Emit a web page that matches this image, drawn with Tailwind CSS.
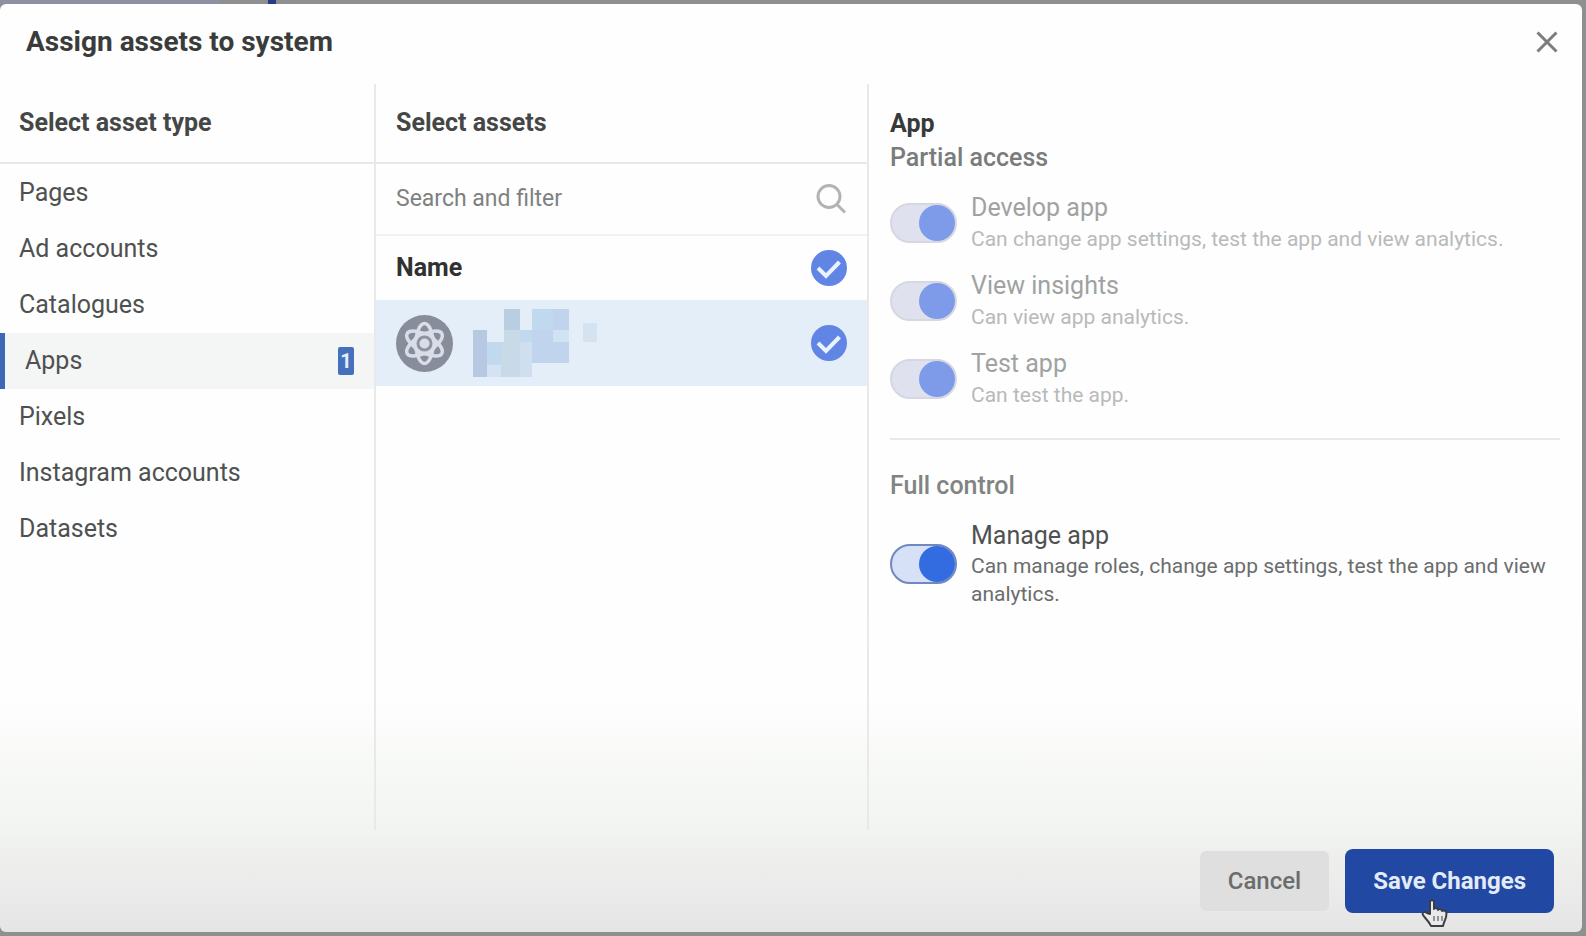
<!DOCTYPE html>
<html lang="en">

<head>
    <meta charset="utf-8">
    <title>Assign assets to system</title>
    <meta name="viewport" content="width=device-width, initial-scale=1.0">
    <script src="https://cdn.jsdelivr.net/npm/@tailwindcss/browser@4"></script>
</head>

<body class="h-screen overflow-hidden bg-[#8e908f] font-['Roboto',sans-serif] text-[#4f5151]">
    <!-- Page behind the dialog -->
    <div class="absolute inset-x-0 top-0 h-1 flex">
        <div class="w-[220px] bg-[#8d90a0]"></div>
        <div class="ml-12 w-2 bg-[#2b3a86]"></div>
    </div>
    <!-- Dialog -->
    <div role="dialog" aria-labelledby="dialog-title" class="relative h-full pt-1 pb-1 pr-1">
        <div class="flex flex-col h-full rounded-md bg-linear-to-b from-[#fdfefd] from-75% via-[#f3f5f2] via-88% to-[#e5e5e5]">
            <div class="flex items-center justify-between h-20 pl-[26px] pr-5 pb-1 shrink-0">
                <h1 id="dialog-title" class="text-[28px] font-bold text-[#3a3c3c]">Assign assets to system</h1>
                <button aria-label="Close" class="p-1"><svg width="22" height="22" viewBox="0 0 22 22" fill="none" stroke="#7b7d7d" stroke-width="3"><path d="M1.5 1.5l19 19M20.5 1.5l-19 19" /></svg></button>
            </div>
            <div class="flex flex-1 min-h-0">
                <!-- Asset types -->
                <div class="w-[376px] shrink-0 border-r-2 border-[#e8e9e8]">
                    <h2 class="flex items-center h-20 px-[19px] border-b-2 border-[#e8e9e8] text-[25px] font-bold text-[#454747]">Select asset type</h2>
                    <ul class="pt-px text-[25px]">
                        <li><a href="#" class="flex items-center h-14 px-[19px]">Pages</a></li>
                        <li><a href="#" class="flex items-center h-14 px-[19px]">Ad accounts</a></li>
                        <li><a href="#" class="flex items-center h-14 px-[19px]">Catalogues</a></li>
                        <li><a href="#" class="flex items-center justify-between h-14 pl-5 pr-5 border-l-[5px] border-[#3f67b8] bg-[#f4f5f5]">Apps <span class="flex items-center justify-center w-4 h-7 rounded-xs bg-[#4470bd] text-xl font-bold text-[#e6eefb]">1</span></a></li>
                        <li><a href="#" class="flex items-center h-14 px-[19px]">Pixels</a></li>
                        <li><a href="#" class="flex items-center h-14 px-[19px]">Instagram accounts</a></li>
                        <li><a href="#" class="flex items-center h-14 px-[19px]">Datasets</a></li>
                    </ul>
                </div>
                <!-- Assets -->
                <div class="w-[493px] shrink-0 border-r-2 border-[#e8e9e8]">
                    <h2 class="flex items-center h-20 px-5 border-b-2 border-[#e8e9e8] text-[25px] font-bold text-[#454747]">Select assets</h2>
                    <label class="flex items-center h-18 px-5 border-b-2 border-[#f0f1f0]">
                        <input type="search" aria-label="Search and filter" placeholder="Search and filter" class="flex-1 min-w-0 text-[23px] outline-none placeholder:text-[#7f8181]">
                        <svg width="32" height="32" viewBox="0 0 32 32" fill="none" stroke="#b2b4b3" stroke-width="3"><circle cx="14" cy="13.5" r="11" /><path d="M22 21.500l8 8" /></svg>
                    </label>
                    <label class="flex items-center justify-between h-16 px-5 text-[25px] font-bold text-[#303232]">Name
                        <span class="grid">
                            <input type="checkbox" checked class="col-start-1 row-start-1 appearance-none size-9 rounded-full bg-[#6085e5]">
                            <svg class="col-start-1 row-start-1 pointer-events-none" width="36" height="36" viewBox="0 0 36 36" fill="none" stroke="#e9f3ff" stroke-width="4"><path d="M7 18l8 8L28.500 12" /></svg>
                        </span>
                    </label>
                    <label class="flex items-center h-[86px] px-5 bg-[#e4eef9]">
                        <svg width="57" height="57" viewBox="0 0 57 57" fill="none"><circle cx="28.500" cy="28.500" r="28.500" fill="#878d9b" /><g stroke="#d9dde8" stroke-width="3.500"><ellipse cx="28.500" cy="28.500" rx="8.500" ry="20" /><ellipse cx="28.500" cy="28.500" rx="8.500" ry="20" transform="rotate(60 28.500 28.500)" /><ellipse cx="28.500" cy="28.500" rx="8.500" ry="20" transform="rotate(120 28.500 28.500)" /></g><circle cx="28.500" cy="28.500" r="12" fill="#d9dde8" /><circle cx="28.500" cy="28.500" r="6.500" stroke="#8e93a2" stroke-width="3" /></svg>
                        <!-- Redacted name -->
                        <svg class="ml-5" width="126" height="68" viewBox="0 0 126 68" shape-rendering="crispEdges"><path fill="#b6c8e2" d="M0 21h14v47H0z" /><path fill="#c1d9ef" d="M14 33h15v23H14zM47 21h12v12H47zM59 0h21v21H59z" /><path fill="#d5e2f3" d="M14 56h15v12H14z" /><path fill="#b9cfe1" d="M31 0h16v21H31z" /><path fill="#c8dae8" d="M31 21h16v47H28V33h3z" /><path fill="#cfdff0" d="M47 33h12v35H47z" /><path fill="#c1d4ed" d="M80 0h16v21H80zM59 21h21v12h16v21H59z" /><path fill="#d0e2f4" d="M80 21h16v12H80z" /><path fill="#d4e3ef" d="M110 14h14v19h-14z" /></svg>
                        <span class="grid ml-auto">
                            <input type="checkbox" checked aria-label="Select app" class="col-start-1 row-start-1 appearance-none size-9 rounded-full bg-[#6085e5]">
                            <svg class="col-start-1 row-start-1 pointer-events-none" width="36" height="36" viewBox="0 0 36 36" fill="none" stroke="#e9f3ff" stroke-width="4"><path d="M7 18l8 8L28.500 12" /></svg>
                        </span>
                    </label>
                </div>
                <!-- Permissions -->
                <div class="flex-1 min-w-0 pt-[22px] pl-[21px] pr-[22px]">
                    <h2 class="h-9 leading-9 text-[25px] font-bold text-[#383a3a]">App</h2>
                    <h3 class="h-9 leading-8 text-[25px] font-medium text-[#7a7c7c]">Partial access</h3>
                    <div class="flex flex-col gap-4 pt-3.5 pb-7 border-b-2 border-[#e8e9e8] text-[#a0a2a2]">
                        <label class="flex items-center gap-[14px]">
                            <input type="checkbox" role="switch" checked disabled class="appearance-none shrink-0 w-[67px] h-10 rounded-full border-2 border-[#d6d7e0] bg-[#e0e1ef] before:block before:size-9 before:ml-[27px] before:rounded-full before:bg-[#7d9be8]">
                            <span><span class="block text-[25px] leading-8">Develop app</span><span class="block text-[21px] leading-[30px] text-[#b8baba]">Can change app settings, test the app and view analytics.</span></span>
                        </label>
                        <label class="flex items-center gap-[14px]">
                            <input type="checkbox" role="switch" checked disabled class="appearance-none shrink-0 w-[67px] h-10 rounded-full border-2 border-[#d6d7e0] bg-[#e0e1ef] before:block before:size-9 before:ml-[27px] before:rounded-full before:bg-[#7d9be8]">
                            <span><span class="block text-[25px] leading-8">View insights</span><span class="block text-[21px] leading-[30px] text-[#b8baba]">Can view app analytics.</span></span>
                        </label>
                        <label class="flex items-center gap-[14px]">
                            <input type="checkbox" role="switch" checked disabled class="appearance-none shrink-0 w-[67px] h-10 rounded-full border-2 border-[#d6d7e0] bg-[#e0e1ef] before:block before:size-9 before:ml-[27px] before:rounded-full before:bg-[#7d9be8]">
                            <span><span class="block text-[25px] leading-8">Test app</span><span class="block text-[21px] leading-[30px] text-[#b8baba]">Can test the app.</span></span>
                        </label>
                    </div>
                    <h3 class="mt-7 h-9 leading-9 text-[25px] font-medium text-[#828484]">Full control</h3>
                    <label class="flex items-center gap-[14px] pt-4">
                        <input type="checkbox" role="switch" checked class="appearance-none shrink-0 w-[67px] h-10 rounded-full border-2 border-[#7187c0] bg-[#d6e1f8] before:block before:size-9 before:ml-[27px] before:rounded-full before:bg-[#326ce0]">
                        <span><span class="block text-[25px] leading-8">Manage app</span><span class="block text-[21px] leading-7 text-[#6b6d6d]">Can manage roles, change app settings, test the app and view analytics.</span></span>
                    </label>
                </div>
            </div>
            <!-- Actions -->
            <div class="flex items-center justify-end gap-4 h-[102px] pt-4 pb-4 pr-7 shrink-0 text-2xl">
                <button class="h-[60px] px-7 rounded-md bg-[#dfdfdf] font-medium text-[#6b6d6d]">Cancel</button>
                <button class="h-16 px-7 rounded-lg bg-[#2149a3] font-bold text-[#e3ebf8]">Save Changes</button>
            </div>
        </div>
        <!-- Pointer -->
        <svg class="absolute right-[137px] bottom-2 pointer-events-none" width="28" height="30" viewBox="0 0 28 30" stroke="#3c3e44" stroke-width="2" stroke-linejoin="round"><path fill="#e9e9e9" d="M9 16V4.500C9 1 13 1 13 4.500V11c1-1.500 4-1 4 1 1-1.500 4-1 4 1 1.500-1 4.500-.5 4.500 2.500 0 5-2 6.500-3.500 12.500H10C8 23 4 20.500 2 17c-1.500-3 2-4 4-2z" /><path fill="none" d="M13 18v5M17 18v5M21 18v5" stroke-width="1" /></svg>
    </div>
</body>

</html>
